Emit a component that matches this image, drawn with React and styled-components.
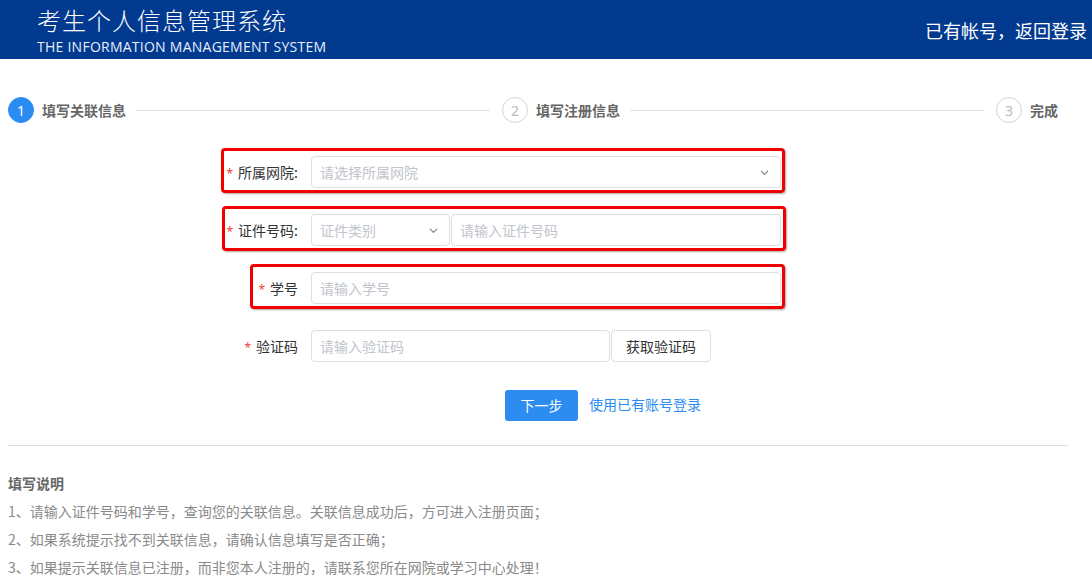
import React from "react";
import styled, { createGlobalStyle } from "styled-components";

const GlobalStyle = createGlobalStyle`
  body {
    margin: 0;
    background: #fff;
    font-family: "Noto Sans CJK SC", "Noto Sans", sans-serif;
  }
`;

const Header = styled.header`
  height: 59px;
  background: #023a90;
  color: #fff;
  display: flex;
  justify-content: space-between;
  align-items: center;
  padding: 0 5px 0 37px;
`;

const Brand = styled.div`
  display: flex;
  flex-direction: column;
`;

const Title = styled.div`
  font-size: 24px;
  letter-spacing: 1px;
  line-height: 30px;
  font-weight: 300;
`;

const Subtitle = styled.div`
  font-family: "Open Sans", "Noto Sans", sans-serif;
  font-size: 14px;
  letter-spacing: 0.25px;
  line-height: 16px;
  margin-top: 4px;
  color: #e8eefa;
`;

const BackLink = styled.div`
  font-size: 18px;
`;

const Main = styled.main`
  padding: 0 24px 0 8px;
`;

const Steps = styled.div`
  display: flex;
  margin: 37px 10px 0 0;
  height: 28px;
  align-items: center;
`;

const Step = styled.div`
  display: flex;
  align-items: center;
  flex: ${(p) => (p.last ? "none" : "1")};
`;

const StepNum = styled.div`
  width: 26px;
  height: 26px;
  border-radius: 50%;
  box-sizing: border-box;
  border: 1px solid ${(p) => (p.active ? "#2a8cf2" : "#d4d4d4")};
  background: ${(p) => (p.active ? "#2a8cf2" : "#fff")};
  color: ${(p) => (p.active ? "#fff" : "#bbb")};
  font-family: "Noto Sans", sans-serif;
  font-size: 14px;
  display: flex;
  align-items: center;
  justify-content: center;
`;

const StepLabel = styled.div`
  margin-left: 8px;
  font-size: 14px;
  font-weight: 700;
  color: #666;
`;

const StepLine = styled.div`
  flex: 1;
  height: 1px;
  background: #e2e2e2;
  margin: 0 12px 0 10px;
`;

const Form = styled.div`
  display: flex;
  flex-direction: column;
  gap: 26px;
  margin-top: 32px;
`;

const Row = styled.div`
  position: relative;
  display: flex;
  align-items: center;
  margin-left: 202px;
`;

/* red annotation frame drawn over a form row */
const Highlight = styled.div`
  position: absolute;
  top: -8px;
  bottom: -5px;
  left: ${(p) => p.left}px;
  right: ${(p) => p.right}px;
  border: 3px solid #f20000;
  border-radius: 4px;
  pointer-events: none;
  box-shadow: 1px 1px 2px rgba(0, 0, 0, 0.35);
`;

const Label = styled.label`
  width: 101px;
  padding-right: 13px;
  text-align: right;
  font-size: 14px;
  color: #333;
  box-sizing: border-box;
  flex: none;
`;

const Star = styled.span`
  color: #f04134;
  margin-right: 5px;
  font-family: "Noto Sans", sans-serif;
  font-size: 12px;
`;

const Fields = styled.div`
  display: flex;
  width: 470px;
`;

const Box = styled.div`
  height: 32px;
  box-sizing: border-box;
  border: 1px solid #dcdee2;
  border-radius: 4px;
  display: flex;
  align-items: center;
  justify-content: space-between;
  padding: 0 10px 0 8px;
  font-size: 14px;
  color: #c0c4cc;
  background: #fff;
  width: ${(p) => (p.w ? `${p.w}px` : "auto")};
  flex: ${(p) => (p.w ? "none" : "1")};
  margin-left: ${(p) => p.ml || 0}px;
`;

const CodeButton = styled.button`
  height: 32px;
  width: 100px;
  margin-left: 1px;
  border: 1px solid #dcdee2;
  border-radius: 4px;
  background: #fff;
  font-family: inherit;
  font-size: 14px;
  color: #333;
`;

const Actions = styled.div`
  display: flex;
  align-items: center;
  margin: 28px 0 0 497px;
  gap: 11px;
`;

const Primary = styled.button`
  width: 73px;
  height: 31px;
  border: none;
  border-radius: 3px;
  background: #2d8cf0;
  color: #fff;
  font-family: inherit;
  font-size: 14px;
  padding: 0 0 2px;
`;

const TextLink = styled.a`
  color: #2d8cf0;
  font-size: 14px;
  text-decoration: none;
  padding-bottom: 4px;
`;

const Divider = styled.hr`
  border: none;
  height: 1px;
  background: #dcdcdc;
  margin: 24px 0 0;
`;

const Notes = styled.section`
  margin-top: 23px;
  font-size: 14px;
  color: #8a8a8a;
  line-height: 28px;
`;

const NotesTitle = styled.div`
  font-weight: 700;
  color: #666;
`;

const Chevron = () => (
  <svg width="11" height="11" viewBox="0 0 12 12" fill="none">
    <path d="M2.5 4.5 6 8l3.5-3.5" stroke="#808695" strokeWidth="1.3" strokeLinecap="round" strokeLinejoin="round" />
  </svg>
);

export default function App() {
  return (
    <>
      <GlobalStyle />
      <Header>
        <Brand>
          <Title>考生个人信息管理系统</Title>
          <Subtitle>THE INFORMATION MANAGEMENT SYSTEM</Subtitle>
        </Brand>
        <BackLink>已有帐号，返回登录</BackLink>
      </Header>
      <Main>
        <Steps>
          <Step>
            <StepNum active>1</StepNum>
            <StepLabel>填写关联信息</StepLabel>
            <StepLine />
          </Step>
          <Step>
            <StepNum>2</StepNum>
            <StepLabel>填写注册信息</StepLabel>
            <StepLine />
          </Step>
          <Step last>
            <StepNum>3</StepNum>
            <StepLabel>完成</StepLabel>
          </Step>
        </Steps>

        <Form>
          <Row>
            <Highlight left={11} right={283} />
            <Label><Star>*</Star>所属网院:</Label>
            <Fields>
              <Box>请选择所属网院<Chevron /></Box>
            </Fields>
          </Row>
          <Row>
            <Highlight left={12} right={282} />
            <Label><Star>*</Star>证件号码:</Label>
            <Fields>
              <Box w={139}>证件类别<Chevron /></Box>
              <Box ml={1}>请输入证件号码</Box>
            </Fields>
          </Row>
          <Row>
            <Highlight left={40} right={283} />
            <Label><Star>*</Star>学号</Label>
            <Fields>
              <Box>请输入学号</Box>
            </Fields>
          </Row>
          <Row>
            <Label><Star>*</Star>验证码</Label>
            <Fields>
              <Box w={299}>请输入验证码</Box>
              <CodeButton>获取验证码</CodeButton>
            </Fields>
          </Row>
        </Form>

        <Actions>
          <Primary>下一步</Primary>
          <TextLink href="#">使用已有账号登录</TextLink>
        </Actions>

        <Divider />

        <Notes>
          <NotesTitle>填写说明</NotesTitle>
          <div>1、请输入证件号码和学号，查询您的关联信息。关联信息成功后，方可进入注册页面；</div>
          <div>2、如果系统提示找不到关联信息，请确认信息填写是否正确；</div>
          <div>3、如果提示关联信息已注册，而非您本人注册的，请联系您所在网院或学习中心处理！</div>
        </Notes>
      </Main>
    </>
  );
}
